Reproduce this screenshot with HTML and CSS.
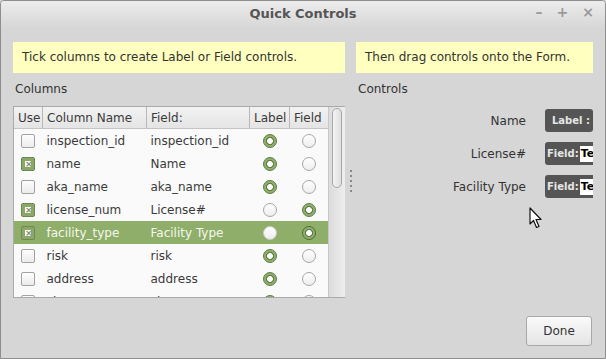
FILE: index.html
```html
<!DOCTYPE html>
<html lang="en">
<head>
    <meta charset="UTF-8">
    <title>Quick Controls</title>
    <link rel="stylesheet" href="styles.css">
</head>
<body>
    <div class="window">
        <div class="titlebar">
            <span class="title">Quick Controls</span>
            <div class="win-buttons">
                <span>&#8211;</span>
                <span>+</span>
                <span>&#215;</span>
            </div>
        </div>

        <div class="content">
            <div class="left">
                <div class="hint">Tick columns to create Label or Field controls.</div>
                <div class="section-label">Columns</div>
                <div class="table-box">
                    <div class="table-scroll">
                        <table class="columns">
                            <thead>
                                <tr>
                                    <th class="c-use">Use</th>
                                    <th class="c-name">Column Name</th>
                                    <th class="c-field">Field:</th>
                                    <th class="c-radio">Label</th>
                                    <th class="c-radio last">Field</th>
                                </tr>
                            </thead>
                            <tbody id="rows">
                                <!-- rows inserted by script -->
                            </tbody>
                        </table>
                    </div>
                    <div class="scrollbar"><div class="thumb"></div></div>
                </div>
            </div>

            <div class="splitter">
                <i></i><i></i><i></i><i></i><i></i>
            </div>

            <div class="right">
                <div class="hint">Then drag controls onto the Form.</div>
                <div class="section-label">Controls</div>
                <div class="controls">
                    <div class="ctrl-row">
                        <span class="ctrl-label">Name</span>
                        <span class="chip label-chip">Label :</span>
                    </div>
                    <div class="ctrl-row">
                        <span class="ctrl-label">License#</span>
                        <span class="chip">Field:<span class="entry">Te</span></span>
                    </div>
                    <div class="ctrl-row">
                        <span class="ctrl-label">Facility Type</span>
                        <span class="chip">Field:<span class="entry">Te</span></span>
                    </div>
                </div>
                <div class="footer">
                    <button class="done">Done</button>
                </div>
            </div>
        </div>

        <svg class="cursor" width="14" height="22" viewBox="0 0 14 22">
            <path d="M1 1 L1 17 L4.5 13.5 L7.5 20.5 L10 19.5 L7 12.5 L12 12.5 Z" fill="#fff" stroke="#111" stroke-width="1.2" stroke-linejoin="round"/>
        </svg>
    </div>

    <script>
        const columns = [
            { use: false, name: 'inspection_id', field: 'inspection_id', mode: 'label' },
            { use: true, name: 'name', field: 'Name', mode: 'label' },
            { use: false, name: 'aka_name', field: 'aka_name', mode: 'label' },
            { use: true, name: 'license_num', field: 'License#', mode: 'field' },
            { use: true, name: 'facility_type', field: 'Facility Type', mode: 'field', selected: true },
            { use: false, name: 'risk', field: 'risk', mode: 'label' },
            { use: false, name: 'address', field: 'address', mode: 'label' },
            { use: false, name: 'city', field: 'city', mode: 'label' }
        ];

        const tbody = document.getElementById('rows');
        columns.forEach(col => {
            const row = document.createElement('tr');
            if (col.selected) row.className = 'selected';
            row.innerHTML =
                '<td class="c-use"><span class="check' + (col.use ? ' on' : '') + '"></span></td>' +
                '<td>' + col.name + '</td>' +
                '<td>' + col.field + '</td>' +
                '<td class="c-radio"><span class="radio' + (col.mode === 'label' ? ' on' : '') + '"></span></td>' +
                '<td class="c-radio"><span class="radio' + (col.mode === 'field' ? ' on' : '') + '"></span></td>';
            tbody.appendChild(row);
        });
    </script>
</body>
</html>
```

FILE: styles.css
```css
body {
    margin: 0;
    font-family: 'DejaVu Sans', sans-serif;
    font-size: 12px;
    color: #3a3a3a;
    background: #d6d6d6;
}
.window {
    position: relative;
    width: 604px;
    height: 357px;
    border: 1px solid #8e8e8e;
    border-radius: 4px 4px 0 0;
    background: #d6d6d6;
    overflow: hidden;
}
.titlebar {
    position: relative;
    height: 28px;
    background: linear-gradient(#ececec, #d6d6d6);
    display: flex;
    justify-content: center;
    align-items: center;
}
.title {
    font-weight: bold;
    font-size: 13px;
    color: #555;
    margin-top: -3px;
}
.win-buttons {
    position: absolute;
    right: 11px;
    top: 3px;
    display: flex;
    gap: 14px;
    color: #9a9a9a;
    font-size: 14px;
    font-weight: bold;
}
.content {
    display: flex;
    padding: 13px 12px 0 12px;
}
.left {
    width: 332px;
}
.right {
    width: 237px;
    display: flex;
    flex-direction: column;
}
.hint {
    height: 31px;
    line-height: 31px;
    background: #ffffc0;
    padding-left: 9px;
    font-size: 12px;
    color: #333;
}
.section-label {
    height: 33px;
    line-height: 33px;
    padding-left: 2px;
    color: #333;
}
.splitter {
    width: 11px;
    display: flex;
    flex-direction: column;
    align-items: center;
    gap: 3px;
    padding-top: 128px;
}
.splitter i {
    width: 2px;
    height: 2px;
    background: #8a8a8a;
}
.table-box {
    display: flex;
    height: 192px;
    border: 1px solid #aaa;
    border-right: none;
    background: #fafafa;
    box-sizing: border-box;
}
.table-scroll {
    width: 315px;
    overflow: hidden;
}
table.columns {
    width: 315px;
    border-collapse: collapse;
    table-layout: fixed;
}
.columns th {
    height: 21px;
    padding: 0 4px;
    font-weight: normal;
    text-align: left;
    background: linear-gradient(#f2f2f2, #e4e4e4);
    border-right: 1px solid #b8b8b8;
    border-bottom: 1px solid #c4c4c4;
    white-space: nowrap;
}
.columns th.last {
    border-right: none;
}
.columns th.c-use { width: 20px; }
.columns th.c-name { width: 95px; }
.columns th.c-field { width: 94px; }
.columns th.c-radio { width: 31px; }
.columns td {
    height: 23px;
    padding: 0 4px;
    white-space: nowrap;
    overflow: hidden;
}
.columns td.c-use {
    padding-left: 7px;
}
.columns td.c-radio {
    text-align: center;
}
.columns tr.selected td {
    background: #8fae6a;
    color: #f4f8ee;
}
.check {
    display: block;
    width: 12px;
    height: 12px;
    border: 1px solid #a2a2a2;
    border-radius: 2px;
    background: linear-gradient(#fdfdfd, #ececec);
}
.check.on {
    position: relative;
    background: #8aa868;
    border-color: #6e8a50;
}
.check.on::before {
    content: '';
    position: absolute;
    left: 3px;
    top: 3px;
    width: 6px;
    height: 6px;
    background: #fff;
}
.check.on::after {
    content: '\00d7';
    position: absolute;
    left: 3px;
    top: 0;
    width: 6px;
    line-height: 12px;
    text-align: center;
    font-size: 9px;
    font-weight: bold;
    color: #7d8a70;
}
.radio {
    display: inline-block;
    vertical-align: middle;
    width: 12px;
    height: 12px;
    border: 1px solid #a6a6a6;
    border-radius: 50%;
    background: linear-gradient(#ffffff, #ededed);
}
.radio.on {
    border-color: #5f7d45;
    background: radial-gradient(circle, #ffffff 0 2.6px, #5f7d45 3.2px 3.8px, #8fb06c 4.4px);
}
.selected .radio {
    border-color: #c8c8c8;
}
.selected .radio.on {
    border-color: #4f6a38;
}
.scrollbar {
    width: 17px;
    background: linear-gradient(90deg, #dcdcdc, #eeeeee);
    border-left: 1px solid #c8c8c8;
    box-sizing: border-box;
    padding: 1px 3px;
}
.thumb {
    height: 78px;
    border: 1px solid #a8a8a8;
    border-radius: 5px;
    background: linear-gradient(90deg, #f4f4f4, #dedede);
}
.controls {
    display: flex;
    flex-direction: column;
    gap: 10px;
    padding-top: 3px;
    overflow: hidden;
}
.ctrl-row {
    display: flex;
    justify-content: flex-end;
    align-items: center;
    gap: 19px;
}
.ctrl-label {
    color: #333;
}
.chip {
    display: flex;
    align-items: center;
    flex: none;
    width: 48px;
    height: 23px;
    padding-left: 2px;
    border-radius: 3px 0 0 3px;
    background: #555;
    color: #e6e6e6;
    font-size: 10px;
    font-weight: bold;
    box-sizing: border-box;
    overflow: hidden;
    white-space: nowrap;
}
.chip.label-chip {
    padding-left: 7px;
    border-radius: 3px;
}
.chip .entry {
    margin-left: 1px;
    padding: 1px 1px;
    background: #fff;
    color: #000;
    font-size: 11px;
    line-height: 14px;
}
.footer {
    display: flex;
    justify-content: flex-end;
    margin-top: 118px;
}
.done {
    width: 66px;
    height: 30px;
    font-family: 'DejaVu Sans', sans-serif;
    font-size: 12px;
    color: #333;
    border: 1px solid #a8a8a8;
    border-radius: 3px;
    background: linear-gradient(#fafafa, #e4e4e4);
    margin-right: 1px;
}
.cursor {
    position: absolute;
    left: 528px;
    top: 206px;
}
```
